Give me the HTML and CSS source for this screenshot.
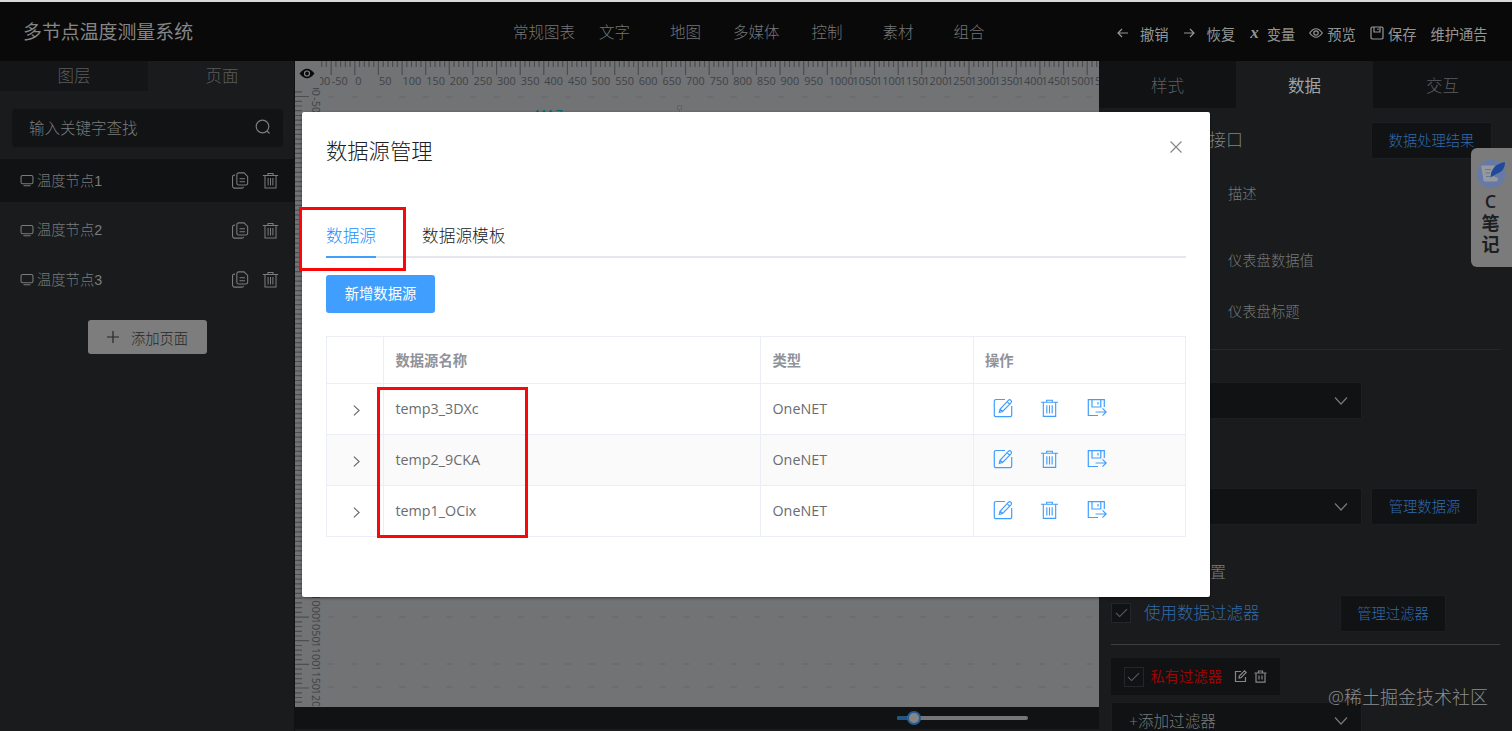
FILE: index.html
```html
<!DOCTYPE html>
<html lang="zh-CN">

<head>
    <meta charset="UTF-8">
    <meta name="viewport" content="width=device-width, initial-scale=1.0">
    <title>多节点温度测量系统</title>
    <link rel="stylesheet" href="styles.css">
</head>

<body>
    <!-- 图标 -->
    <svg class="symbols" width="0" height="0">
        <symbol id="i-edit" viewBox="0 0 20 20">
            <path d="M12 1.5H3A1.7 1.7 0 0 0 1.300 3.200V17A1.700 1.700 0 0 0 3 18.700H17A1.700 1.700 0 0 0 18.700 17V8" />
            <path d="M6.300 14.500L7 11.300L15.500 2.200Q16.800 1.200 18 2.400Q19 3.600 18 4.800L9.600 13.500ZM14.200 3.700L16.500 6.100M7 11.300L9.600 13.500" />
        </symbol>
        <symbol id="i-trash" viewBox="0 0 20 20">
            <path d="M1 4H19M7 4V1.800H13V4M3.500 4V18.800H16.500V4M7.200 7V15.800M10 7V15.800M12.800 7V15.800" />
        </symbol>
        <symbol id="i-export" viewBox="0 0 20 20">
            <path d="M11 17.500H1.300V1.700H17.300V9M5 1.700V9H13.800V1.700M11 4V6.500M8.500 14H19M15.500 10.300L19.200 14L15.500 17.700" />
        </symbol>
        <symbol id="i-copy" viewBox="0 0 20 20">
            <path d="M8.500 1.500H14.500L18.500 5.500V13A2 2 0 0 1 16.500 15H8.500A2 2 0 0 1 6.500 13V3.500A2 2 0 0 1 8.500 1.500ZM9.500 8H15.500M9.500 11.300H15.500" />
            <path d="M4.500 4H3.500A2 2 0 0 0 1.700 6V16A2.300 2.300 0 0 0 4 18.500H12A2 2 0 0 0 14 17" />
        </symbol>
        <symbol id="i-screen" viewBox="0 0 16 14">
            <path d="M3 1.200H13A1.800 1.800 0 0 1 14.800 3V9A1.800 1.800 0 0 1 13 10.800H3A1.800 1.800 0 0 1 1.200 9V3A1.800 1.800 0 0 1 3 1.200ZM4 13H12" />
        </symbol>
        <symbol id="i-down" viewBox="0 0 14 10">
            <path d="M1 1.500L7 8L13 1.500" />
        </symbol>
        <symbol id="i-right" viewBox="0 0 8 14">
            <path d="M1 1.500L7 7L1 12.500" />
        </symbol>
        <symbol id="i-check" viewBox="0 0 14 10">
            <path d="M1 4.800L5 8.800L13 0.800" />
        </symbol>
    </svg>

    <div class="app">
        <div class="header">
            <div class="logo">多节点温度测量系统</div>
            <div class="nav">
                <span class="nav-item">常规图表</span>
                <span class="nav-item">文字</span>
                <span class="nav-item">地图</span>
                <span class="nav-item">多媒体</span>
                <span class="nav-item">控制</span>
                <span class="nav-item">素材</span>
                <span class="nav-item">组合</span>
            </div>
            <div class="tools">
                <span class="tool tool-undo"><svg class="icon" width="11" height="10" viewBox="0 0 11 10"><path d="M11 5H1M5 1L1 5L5 9" /></svg>撤销</span>
                <span class="tool tool-redo"><svg class="icon" width="11" height="10" viewBox="0 0 11 10"><path d="M0 5H10M6 1L10 5L6 9" /></svg>恢复</span>
                <span class="tool tool-var"><i class="var">x</i>变量</span>
                <span class="tool tool-view"><svg class="icon" width="14" height="10" viewBox="0 0 14 10"><path d="M0.700 5Q7 -3.500 13.300 5Q7 13.500 0.700 5Z" /><circle cx="7" cy="5" r="2.200" /></svg>预览</span>
                <span class="tool tool-save"><svg class="icon" width="14" height="14" viewBox="0 0 14 14"><path d="M2 1H12L13 2V12L12 13H2L1 12V2ZM4 1V6H10V1M8 2.500V4" /></svg>保存</span>
                <span class="tool">维护通告</span>
            </div>
        </div>

        <div class="main">
            <div class="left">
                <div class="left-tabs">
                    <div class="left-tab dark">图层</div>
                    <div class="left-tab">页面</div>
                </div>
                <div class="search">
                    <span>输入关键字查找</span>
                    <svg class="icon" width="16" height="16" viewBox="0 0 16 16"><circle cx="7.500" cy="7.500" r="6.300" /><path d="M12 12L14.500 14.500" /></svg>
                </div>
                <div class="page-item active">
                    <svg class="icon" width="14" height="13"><use href="#i-screen" /></svg>
                    <span class="page-name">温度节点1</span>
                    <svg class="icon copy" width="18" height="19"><use href="#i-copy" /></svg>
                    <svg class="icon" width="17" height="19"><use href="#i-trash" /></svg>
                </div>
                <div class="page-item">
                    <svg class="icon" width="14" height="13"><use href="#i-screen" /></svg>
                    <span class="page-name">温度节点2</span>
                    <svg class="icon copy" width="18" height="19"><use href="#i-copy" /></svg>
                    <svg class="icon" width="17" height="19"><use href="#i-trash" /></svg>
                </div>
                <div class="page-item">
                    <svg class="icon" width="14" height="13"><use href="#i-screen" /></svg>
                    <span class="page-name">温度节点3</span>
                    <svg class="icon copy" width="18" height="19"><use href="#i-copy" /></svg>
                    <svg class="icon" width="17" height="19"><use href="#i-trash" /></svg>
                </div>
                <div class="add-page">
                    <svg class="icon" width="12" height="12" viewBox="0 0 12 12"><path d="M0 6H12M6 0V12" /></svg>
                    <span>添加页面</span>
                </div>
                <div class="left-scroll"></div>
            </div>

            <div class="center">
                <svg class="canvas" id="canvas" width="804" height="646" viewBox="295 61 804 646"></svg>
                <div class="zoom-bar">
                    <div class="slider">
                        <div class="slider-fill"></div>
                        <div class="slider-btn"></div>
                    </div>
                </div>
            </div>

            <div class="right">
                <div class="right-tabs">
                    <div class="right-tab">样式</div>
                    <div class="right-tab active">数据</div>
                    <div class="right-tab">交互</div>
                </div>
                <div class="api-row">
                    <span class="api-title">数据接口</span>
                    <span class="btn btn-result">数据处理结果</span>
                </div>
                <div class="fields">
                    <div class="field field-head">描述</div>
                    <div class="field field-value">仪表盘数据值</div>
                    <div class="field">仪表盘标题</div>
                </div>
                <div class="select select-type"><svg class="icon" width="14" height="10"><use href="#i-down" /></svg></div>
                <div class="source-row">
                    <div class="select"><svg class="icon" width="14" height="10"><use href="#i-down" /></svg></div>
                    <span class="btn btn-source">管理数据源</span>
                </div>
                <div class="filter-title">过滤器设置</div>
                <div class="filter-row">
                    <span class="check"><svg class="icon" width="13" height="10"><use href="#i-check" /></svg></span>
                    <span class="filter-label">使用数据过滤器</span>
                    <span class="btn btn-filter">管理过滤器</span>
                </div>
                <div class="chip">
                    <span class="check"><svg class="icon" width="13" height="10"><use href="#i-check" /></svg></span>
                    <span class="chip-name">私有过滤器</span>
                    <svg class="icon" width="13" height="13" viewBox="0 0 13 13"><path d="M7 1.500H1.500V11.500H11.500V7M5 8L5.300 6L10.500 0.800L12.200 2.500L7 7.700Z" /></svg>
                    <svg class="icon" width="13" height="13" viewBox="0 0 13 13"><path d="M0.500 3H12.500M4.500 3V1H8.500V3M2 3V12.200H11V3M5 5.500V9.500M8 5.500V9.500" /></svg>
                </div>
                <div class="select select-add"><span>+添加过滤器</span><svg class="icon" width="14" height="10"><use href="#i-down" /></svg></div>
            </div>
        </div>

        <div class="note">
            <svg width="30" height="30" viewBox="0 0 30 30">
                <circle cx="15" cy="15" r="14.300" fill="#667aa5" />
                <path d="M5 6.500H19L17 17L22 19Q22 23 19 22.500H9Q7 22 7 18Z" fill="#96999d" />
                <path d="M9 10.500H15M9.500 14H14M10 17.500H14" stroke="#65789e" fill="none" />
                <path d="M14.500 18.500Q15 5.500 29 3Q29.500 12 19.500 15.500Z" fill="#20499a" />
            </svg>
            <span>C</span>
            <span>笔</span>
            <span>记</span>
        </div>

        <div class="dialog">
            <div class="dialog-head">
                <span class="dialog-title">数据源管理</span>
                <svg class="icon close" width="12" height="12" viewBox="0 0 12 12"><path d="M0.500 0.500L11.500 11.500M11.500 0.500L0.500 11.500" /></svg>
            </div>
            <div class="tabs">
                <div class="tab active">数据源</div>
                <div class="tab">数据源模板</div>
            </div>
            <div class="btn-add">新增数据源</div>
            <div class="table" id="table">
                <div class="tr th">
                    <div class="td"></div>
                    <div class="td">数据源名称</div>
                    <div class="td">类型</div>
                    <div class="td">操作</div>
                </div>
            </div>
        </div>

        <div class="mark mark-tab"></div>
        <div class="mark mark-name"></div>
        <div class="watermark">@稀土掘金技术社区</div>
    </div>

    <script>
        var sources = ['temp3_3DXc', 'temp2_9CKA', 'temp1_OCix'];
        var oTable = document.getElementById('table');
        var oCanvas = document.getElementById('canvas');

        // 数据源列表
        for (let i = 0; i < sources.length; i++) {
            oTable.innerHTML += '<div class="tr">' +
                '<div class="td expand"><svg class="icon" width="7" height="13"><use href="#i-right" /></svg></div>' +
                '<div class="td name">' + sources[i] + '</div>' +
                '<div class="td name">OneNET</div>' +
                '<div class="td actions">' +
                '<svg class="icon" width="20" height="20"><use href="#i-edit" /></svg>' +
                '<svg class="icon" width="19" height="20"><use href="#i-trash" /></svg>' +
                '<svg class="icon" width="20" height="20"><use href="#i-export" /></svg>' +
                '</div></div>';
        }

        // 标尺，每10一小格，每50一大格
        function fnRuler() {
            var path = '';
            var text = '';
            var dots = '';
            for (let v = -70; v <= 1570; v += 10) {
                let x = 354.8 + v * 0.4725;
                path += 'M' + x.toFixed(1) + ' 61V' + (v % 50 == 0 ? 75 : 67);
            }
            for (let v = -100; v <= 1550; v += 50) {
                let x = 355.300 + v * 0.4725;
                text += '<text x="' + (v >= 1000 ? x + 1 : x) + '" y="85">' + v + '</text>';
            }
            var left = '';
            for (let v = -60; v <= 1230; v += 10) {
                let y = 120.2 + v * 0.4732;
                path += 'M295 ' + y.toFixed(1) + 'H' + (v % 50 == 0 ? 309 : 302);
            }
            for (let v = -100; v <= 1200; v += 50) {
                let y = 121 + v * 0.4732;
                left += '<text transform="translate(312 ' + y + ') rotate(90)">' + v + '</text>';
            }
            [97, 617, 664, 687].forEach(function (y) {
                for (let x = 328; x < 1095; x += 23.7) {
                    dots += 'M' + x.toFixed(1) + ' ' + y + 'h6';
                }
            });
            oCanvas.innerHTML =
                '<clipPath id="top"><rect x="320" y="61" width="779" height="30" /></clipPath>' +
                '<clipPath id="side"><rect x="295" y="88" width="30" height="618" /></clipPath>' +
                '<path class="dots" d="' + dots + '" />' +
                '<path class="ticks" d="' + path + '" />' +
                '<g class="nums" clip-path="url(#top)">' + text + '</g>' +
                '<g class="nums" clip-path="url(#side)">' + left + '</g>' +
                '<path class="eye" d="M299.500 73.500Q307 64 314.500 73.500Q307 83 299.500 73.500Z" />' +
                '<circle class="eye-ring" cx="307" cy="73.500" r="2.500" />' +
                '<text class="gauge" x="533" y="118">444.7</text>' +
                '<path class="handle" d="M677.500 105.500h4v4h-4zM679.500 110V112" />';
        }
        fnRuler();
    </script>
</body>

</html>
```

FILE: styles.css
```css
body {
    margin: 0;
    font-family: "Open Sans", "Noto Sans CJK SC", sans-serif;
    font-size: 14.3px;
    font-weight: 300;
    color: #7b7d7e;
}

.symbols {
    display: block;
}

.icon {
    fill: none;
    stroke: currentColor;
    stroke-width: 1.2;
    flex: none;
}

.app {
    position: relative;
    width: 1512px;
    height: 731px;
    overflow: hidden;
    display: flex;
    flex-direction: column;
    box-sizing: border-box;
    border-top: 2px solid #d6d9dc;
    background: #191b1c;
    white-space: nowrap;
}

/* 顶部 */
.header {
    height: 59px;
    flex: none;
    display: flex;
    align-items: center;
    background: #090909;
    box-sizing: border-box;
    padding: 0 0 1px 23px;
}

.logo {
    width: 490px;
    font-size: 18.9px;
    font-weight: 400;
    color: #858687;
}

.nav {
    display: flex;
    width: 604px;
    font-size: 15.5px;
    color: #757677;
}

.nav-item {
    margin-right: 40px;
}

.nav-item:first-child {
    margin-right: 24px;
}

.nav-item:nth-child(3) {
    margin-right: 32px;
}

.nav-item:nth-child(4) {
    margin-right: 32px;
}

.tools {
    display: flex;
    color: #949596;
    font-weight: 400;
    padding-top: 4px;
}

.tool {
    display: flex;
    align-items: center;
    margin-right: 14px;
}

.tool-undo,
.tool-redo {
    margin-right: 15px;
}

.tool-undo .icon,
.tool-redo .icon {
    margin-right: 12px;
}

.var {
    font-family: "Liberation Serif", serif;
    font-weight: bold;
    font-size: 17px;
    line-height: 14px;
    margin-right: 8px;
}

.tool-view .icon,
.tool-save .icon {
    margin-right: 4px;
}

.main {
    display: flex;
    flex: 1;
}

/* 左侧页面列表 */
.left {
    width: 295px;
    display: flex;
    flex-direction: column;
    box-sizing: border-box;
    border-right: 1px solid #101112;
}

.left-tabs {
    display: flex;
    height: 30px;
    font-size: 16.5px;
    line-height: 29px;
    color: #5a5c5d;
    text-align: center;
}

.left-tab {
    width: 148px;
    flex: none;
}

.dark {
    background: #131517;
}

.search {
    margin: 18px 11px 12px 12px;
    padding: 0 12px 2px 17px;
    height: 38px;
    box-sizing: border-box;
    border-radius: 4px;
    background: #111314;
    color: #7a7c7d;
    font-size: 15.5px;
    display: flex;
    align-items: center;
    justify-content: space-between;
}

.page-item {
    height: 43px;
    margin-bottom: 6.700px;
    padding: 0 15px 0 20px;
    display: flex;
    align-items: center;
    color: #7a7c7d;
    font-family: "Liberation Sans", "Noto Sans CJK SC", sans-serif;
}

.page-item.active {
    background: #101213;
}

.page-name {
    flex: 1;
    margin-left: 3px;
    padding-bottom: 3px;
}

.copy {
    margin-right: 13px;
}

.add-page {
    width: 119px;
    height: 34px;
    margin: 12px 0 0 88px;
    border-radius: 3px;
    background: #7d7d7d;
    color: #252728;
    display: flex;
    align-items: center;
    justify-content: center;
    gap: 12px;
}

.left-scroll {
    width: 59px;
    height: 2px;
    margin: auto 0 0 178px;
    background: #4e4f50;
}

/* 画布 */
.center {
    width: 804px;
}

.canvas {
    display: block;
    background: #717375;
}

.ticks {
    stroke: #4c4e50;
    stroke-width: 1.2;
    fill: none;
}

.nums {
    fill: #404245;
    font-size: 10.9px;
    font-weight: 400;
}

.dots {
    stroke: #696b6d;
    stroke-width: 1.5;
}

.eye {
    fill: #090909;
}

.eye-ring {
    fill: none;
    stroke: #85878a;
    stroke-width: 1.2;
}

.gauge {
    fill: #076b66;
    font-size: 11.5px;
    font-weight: 600;
}

.handle {
    fill: none;
    stroke: #456f70;
}

.zoom-bar {
    height: 22px;
    background: #101213;
    display: flex;
    align-items: center;
    padding-left: 602px;
    box-sizing: border-box;
}

.slider {
    width: 131px;
    height: 4px;
    border-radius: 2px;
    background: #757677;
    display: flex;
    align-items: center;
}

.slider-fill {
    width: 10px;
    height: 4px;
    border-radius: 2px 0 0 2px;
    background: #245586;
}

.slider-btn {
    width: 10px;
    height: 10px;
    border: 2px solid #245f98;
    border-radius: 50%;
    background: #858585;
}

/* 右侧属性 */
.right {
    flex: 1;
    display: flex;
    flex-direction: column;
    align-items: flex-start;
}

.right-tabs {
    display: flex;
    align-self: stretch;
    height: 47px;
    line-height: 50px;
    font-size: 16.5px;
    text-align: center;
    color: #5c5f61;
}

.right-tab {
    width: 137px;
    background: #101214;
}

.right-tab:last-child {
    flex: 1;
}

.right-tab.active {
    background: none;
    color: #a0a2a3;
    font-weight: 400;
    line-height: 49px;
}

.btn {
    height: 37px;
    line-height: 35px;
    box-sizing: border-box;
    border: 1px solid #1c1f21;
    border-radius: 3px;
    background: #101214;
    color: #316aab;
    text-align: center;
}

.api-row {
    display: flex;
    align-items: center;
    margin: 14px 0 0 76px;
}

.api-title {
    width: 196px;
    padding-bottom: 5px;
    font-size: 17px;
    color: #808283;
}

.btn-result {
    width: 121px;
}

.fields {
    width: 389px;
    height: 191px;
    margin-left: 12px;
    padding-left: 117px;
    box-sizing: border-box;
    border-bottom: 1px solid #262829;
    color: #767879;
}

.field {
    line-height: 20px;
}

.field-head {
    padding-top: 25px;
    margin-bottom: 47px;
}

.field-value {
    margin-bottom: 31px;
}

.select {
    width: 251px;
    height: 37px;
    padding: 0 13px;
    box-sizing: border-box;
    border: 1px solid #1c1f20;
    background: #101214;
    color: #77797a;
    display: flex;
    align-items: center;
    justify-content: flex-end;
}

.select-type {
    margin: 32px 0 69px 12px;
}

.source-row {
    display: flex;
    margin-left: 12px;
    gap: 9px;
}

.btn-source {
    width: 107px;
}

.filter-title {
    width: 127px;
    margin: 37px 0 12px;
    line-height: 21px;
    font-size: 16px;
    text-align: right;
    color: #7a7c7d;
}

.filter-row {
    width: 389px;
    height: 49px;
    margin-left: 12px;
    border-bottom: 1px solid #3d3f40;
    display: flex;
    align-items: flex-start;
}

.check {
    width: 20px;
    height: 20px;
    box-sizing: border-box;
    border: 1px solid #22272b;
    background: #101214;
    color: #5a5e61;
    display: flex;
    align-items: center;
    justify-content: center;
}

.filter-row .check {
    margin-top: 8px;
}

.filter-label {
    width: 196px;
    margin-left: 13px;
    line-height: 36px;
    font-size: 16.5px;
    color: #316aab;
}

.btn-filter {
    width: 106px;
}

.chip {
    height: 37px;
    margin: 13px 0 7px 12px;
    padding: 0 13px;
    box-sizing: border-box;
    width: 169px;
    background: #101213;
    display: flex;
    align-items: center;
    gap: 7px;
    color: #858788;
}

.chip-name {
    color: #9c0505;
    font-weight: 400;
    margin-right: 5px;
    padding-bottom: 2px;
}

.select-add {
    flex: none;
    margin-left: 12px;
    padding-left: 17px;
    font-size: 15.6px;
    justify-content: space-between;
}

/* 笔记浮标 */
.note {
    position: absolute;
    right: 0;
    top: 146px;
    width: 41px;
    height: 119px;
    padding: 11px 2px 0 0;
    box-sizing: border-box;
    border-radius: 6px 0 0 6px;
    background: #7b7b7b;
    color: #1d1e1f;
    font-size: 18px;
    font-weight: 600;
    line-height: 21.500px;
    display: flex;
    flex-direction: column;
    align-items: center;
}

.note svg {
    margin-bottom: 2px;
    flex: none;
}

/* 弹窗 */
.dialog {
    position: absolute;
    left: 302px;
    top: 110px;
    width: 908px;
    height: 485px;
    padding: 0 24px;
    box-sizing: border-box;
    border-radius: 2px;
    background: #fff;
    box-shadow: 0 1px 3px rgba(0, 0, 0, .5);
    color: #606266;
}

.dialog-head {
    display: flex;
    justify-content: space-between;
    height: 102px;
}

.dialog-title {
    margin-top: 24px;
    line-height: 30px;
    font-size: 21.3px;
    color: #202123;
}

.close {
    margin: 29px 4px 0 0;
    color: #85878b;
}

.tabs {
    display: flex;
    gap: 46px;
    height: 42px;
    border-bottom: 2px solid #e4e7ed;
    font-size: 16.700px;
    line-height: 43px;
    color: #202123;
}

.tab.active {
    height: 42px;
    border-bottom: 2px solid #409eff;
    color: #2090ff;
}

.btn-add {
    width: 109px;
    height: 38px;
    line-height: 38px;
    margin: 17px 0 23px;
    border-radius: 3px;
    background: #409eff;
    color: #fff;
    text-align: center;
    font-weight: 400;
}

.table {
    border: 1px solid #ebeef5;
    border-width: 1px 0 0 1px;
}

.tr {
    display: grid;
    grid-template-columns: 57px 377px 212.500px 1fr;
    height: 51px;
}

.tr.th {
    height: 47px;
    font-weight: 700;
    color: #909399;
}

.tr:nth-child(3) {
    background: #fafafa;
}

.td {
    display: flex;
    align-items: center;
    padding: 0 0 2px 11.5px;
    border: 1px solid #ebeef5;
    border-width: 0 1px 1px 0;
}

.td.name {
    font-weight: 400;
    color: #6a6c70;
}

.td.expand {
    padding: 3px 0 0 2px;
    justify-content: center;
}

.td.actions {
    padding: 0 0 3px 19px;
    gap: 27.5px;
    color: #409eff;
}

/* 红框标注 */
.mark {
    position: absolute;
    box-sizing: border-box;
    border: 3px solid #f80808;
}

.mark-tab {
    left: 299px;
    top: 205px;
    width: 107px;
    height: 64px;
}

.mark-name {
    left: 377px;
    top: 385px;
    width: 151px;
    height: 151px;
}

.watermark {
    position: absolute;
    right: 24px;
    bottom: 21px;
    font-size: 18px;
    line-height: 26px;
    color: #8c8d8e;
}
```
